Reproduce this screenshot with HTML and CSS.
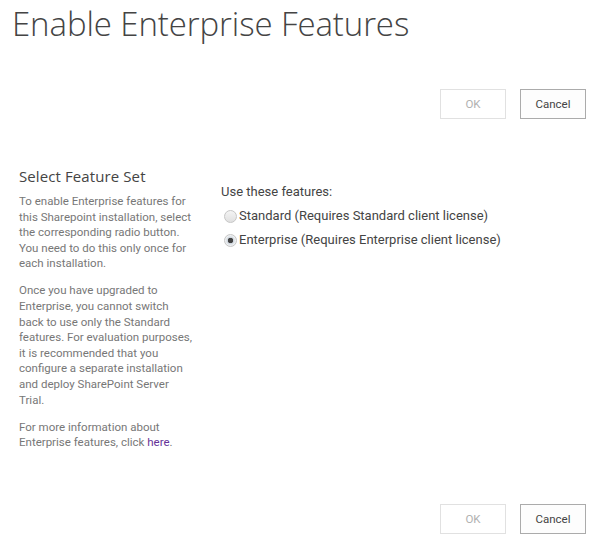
FILE: index.html
```html
<!DOCTYPE html>
<html>
<head>
<meta charset="utf-8">
<link rel="stylesheet" href="styles.css">
</head>
<body>
<div class="page">
  <h1 class="title">Enable Enterprise Features</h1>
  <div class="toolbar top">
    <button class="btn" disabled>OK</button>
    <button class="btn">Cancel</button>
  </div>
  <div class="section">
    <div class="desc">
      <h3 class="desc-head">Select Feature Set</h3>
      <p>To enable Enterprise features for<br>this Sharepoint installation, select<br>the corresponding radio button.<br>You need to do this only once for<br>each installation.</p>
      <p>Once you have upgraded to<br>Enterprise, you cannot switch<br>back to use only the Standard<br>features. For evaluation purposes,<br>it is recommended that you<br>configure a separate installation<br>and deploy SharePoint Server<br>Trial.</p>
      <p>For more information about<br>Enterprise features, click <a href="#" class="link">here</a>.</p>
    </div>
    <div class="control">
      <div class="label">Use these features:</div>
      <label class="radio-row"><span class="radio"></span>Standard (Requires Standard client license)</label>
      <label class="radio-row"><span class="radio checked"></span>Enterprise (Requires Enterprise client license)</label>
    </div>
  </div>
  <div class="toolbar bottom">
    <button class="btn" disabled>OK</button>
    <button class="btn">Cancel</button>
  </div>
</div>
</body>
</html>
```
FILE: styles.css
```css
html, body {
  margin: 0;
  padding: 0;
  background: #fff;
}
body {
  font-family: Roboto, "Open Sans", sans-serif;
  color: #444;
}
.page {
  width: 593px;
  height: 548px;
  display: flex;
  flex-direction: column;
}
.title {
  margin: 0;
  padding: 3px 0 0 12px;
  font-family: "Open Sans", sans-serif;
  font-size: 33px;
  font-weight: 300;
  line-height: 42px;
  color: #444;
  letter-spacing: -0.1px;
}
.toolbar {
  display: flex;
  justify-content: flex-end;
  gap: 14px;
  padding-right: 7px;
}
.toolbar.top {
  margin-top: 44px;
}
.toolbar.bottom {
  margin-top: auto;
  margin-bottom: 14px;
}
.btn {
  width: 66px;
  height: 30px;
  border: 1px solid #ababab;
  background: #fdfdfd;
  font-family: Roboto, sans-serif;
  font-size: 11.5px;
  color: #444;
  padding: 0;
}
.btn[disabled] {
  border-color: #e1e1e1;
  color: #b1b1b1;
  background: #fff;
}
.section {
  display: flex;
  margin-top: 47px;
  padding-left: 19px;
}
.desc {
  width: 182px;
  font-size: 11.5px;
  line-height: 15.6px;
  color: #777;
}
.desc-head {
  margin: 0 0 8px;
  font-family: "Open Sans", sans-serif;
  font-size: 15px;
  font-weight: 400;
  line-height: 20px;
  color: #444;
  letter-spacing: 0.1px;
}
.desc p {
  margin: 0 0 11.4px;
  white-space: nowrap;
}
.link {
  color: #663399;
  text-decoration: none;
}
.control {
  margin-left: 20px;
  padding-top: 14px;
  font-size: 13px;
  line-height: 24px;
  color: #444;
}
.label {
  height: 24px;
}
.radio-row {
  display: flex;
  align-items: center;
  gap: 2px;
  margin-left: 3px;
  height: 24px;
}
.radio {
  box-sizing: border-box;
  width: 13px;
  height: 13px;
  border-radius: 50%;
  border: 1px solid #c6c6c6;
  background: linear-gradient(#f4f4f4, #e0e0e0);
  position: relative;
}
.radio.checked {
  background: radial-gradient(circle, #444 0 2.5px, #cfd6de 3px, #eef0f2 5px);
}
```
